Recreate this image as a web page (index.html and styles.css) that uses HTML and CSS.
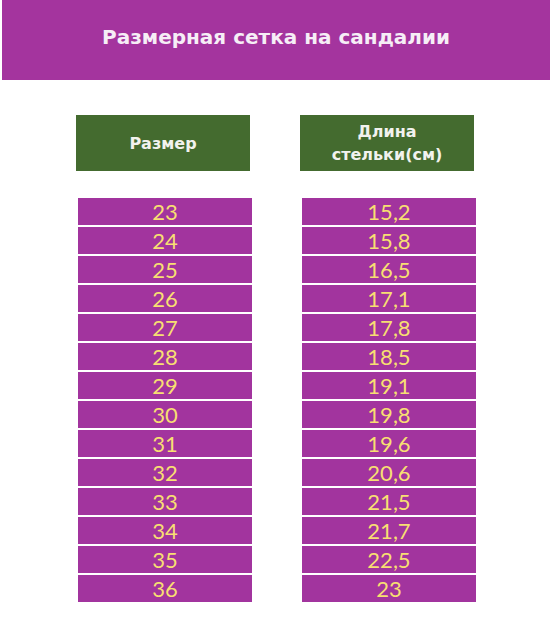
FILE: index.html
```html
<!DOCTYPE html>
<html lang="ru">
<head>
<meta charset="utf-8">
<title>Размерная сетка на сандалии</title>
<link rel="stylesheet" href="styles.css">
</head>
<body>
<div class="banner"><h1 class="title">Размерная сетка на сандалии</h1></div>
<div class="table">
  <div class="col">
    <div class="head">Размер</div>
    <div class="rows">
      <div class="cell">23</div><div class="cell">24</div><div class="cell">25</div><div class="cell">26</div>
      <div class="cell">27</div><div class="cell">28</div><div class="cell">29</div><div class="cell">30</div>
      <div class="cell">31</div><div class="cell">32</div><div class="cell">33</div><div class="cell">34</div>
      <div class="cell">35</div><div class="cell">36</div>
    </div>
  </div>
  <div class="col">
    <div class="head">Длина<br>стельки(см)</div>
    <div class="rows">
      <div class="cell">15,2</div><div class="cell">15,8</div><div class="cell">16,5</div><div class="cell">17,1</div>
      <div class="cell">17,8</div><div class="cell">18,5</div><div class="cell">19,1</div><div class="cell">19,8</div>
      <div class="cell">19,6</div><div class="cell">20,6</div><div class="cell">21,5</div><div class="cell">21,7</div>
      <div class="cell">22,5</div><div class="cell">23</div>
    </div>
  </div>
</div>
</body>
</html>
```
FILE: styles.css
```css
html, body {
  margin: 0;
  padding: 0;
  background: #ffffff;
}
body {
  font-family: "DejaVu Sans", "Open Sans", "Liberation Sans", sans-serif;
  width: 550px;
}
.banner {
  margin-left: 2px;
  height: 80px;
  background: #a4349e;
  display: flex;
  align-items: center;
  justify-content: center;
}
.title {
  margin: 0 0 6px 0;
  color: #f6eef6;
  font-size: 20px;
  font-weight: 700;
  letter-spacing: 0;
}
.table {
  display: flex;
  justify-content: flex-start;
  gap: 50px;
  padding: 35px 0 0 76px;
}
.col {
  width: 174px;
  display: flex;
  flex-direction: column;
}
.head {
  width: 174px;
  height: 56px;
  background: #446b2f;
  color: #f2f2ee;
  font-weight: 700;
  font-size: 16px;
  line-height: 23px;
  display: flex;
  align-items: center;
  justify-content: center;
  text-align: center;
}
.rows {
  margin-top: 27px;
  margin-left: 2px;
  display: flex;
  flex-direction: column;
  gap: 2px;
}
.cell {
  width: 174px;
  height: 27px;
  background: #a2349e;
  color: #f7df72;
  font-family: "Lato", "DejaVu Sans", sans-serif;
  font-size: 22px;
  line-height: 27px;
  text-align: center;
}
```
